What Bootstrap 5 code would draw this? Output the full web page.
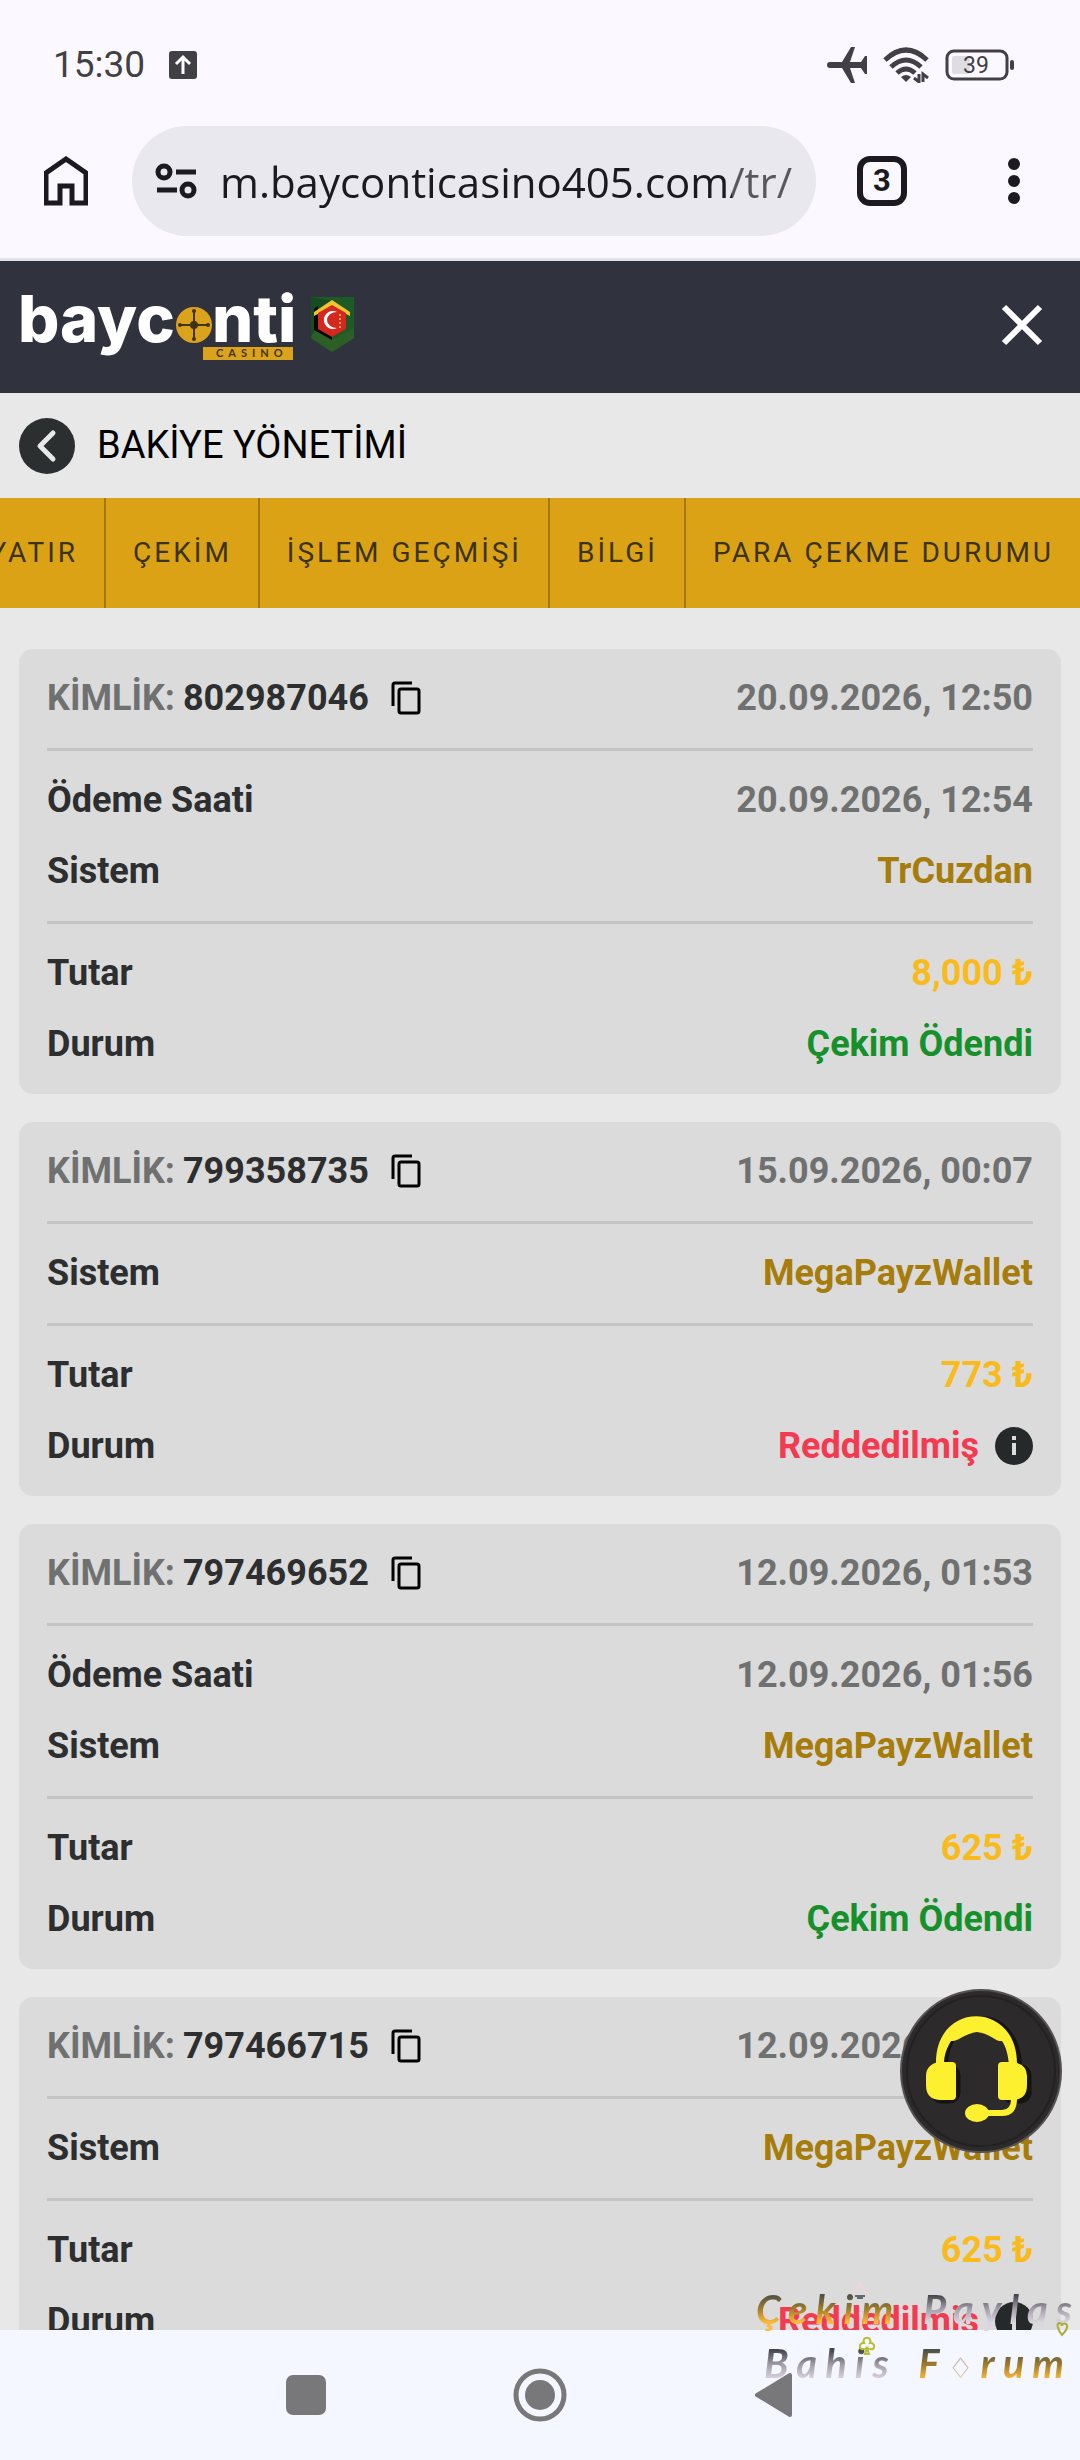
<!DOCTYPE html>
<html lang="tr">
<head>
    <meta charset="UTF-8">
    <meta name="viewport" content="width=device-width, initial-scale=1.0">
    <title>Bakiye Yönetimi</title>
    <!-- Bootstrap CSS -->
    <link href="https://cdn.jsdelivr.net/npm/bootstrap@5.3.0/dist/css/bootstrap.min.css" rel="stylesheet">
    <style>
        body {
            font-family: Roboto, "Liberation Sans", sans-serif;
            background: #e8e8e8;
            color: #2c2e2f;
        }
        svg { display: block; flex-shrink: 0; }
        button { border: 0; background: none; padding: 0; color: inherit; }

        /* phone status bar and browser toolbar */
        .phone-top { background: #fbf9ff; }
        .status-bar {
            height: 126px;
            padding: 4px 64px 0 53px;
            color: #414045;
            font-size: 37px;
        }
        .toolbar {
            padding-bottom: 22px;
            border-bottom: 3px solid #e2e1e9;
            color: #1b1a20;
        }
        .tool-btn { width: 132px; height: 110px; }
        .url-pill { height: 110px; background: #e9e8ee; padding: 0 22px; gap: 22px; min-width: 0; }
        .url-input {
            border: 0;
            outline: 0;
            padding: 0;
            min-width: 0;
            font-family: "Open Sans", Roboto, sans-serif;
            font-size: 42px;
            color: transparent;
            background: linear-gradient(90deg, #1b1a20 512px, #59585f 512px);
            -webkit-background-clip: text;
            background-clip: text;
        }
        .tab-count {
            width: 50px;
            height: 50px;
            border: 6px solid #1b1a20;
            border-radius: 13px;
            font-size: 31px;
            font-weight: 700;
        }

        /* site header */
        .site-header { height: 132px; background: #30323e; padding: 0 36px 4px 19px; }
        .page-head { height: 105px; padding-left: 19px; gap: 22px; color: #000; }
        .page-head h1 { font-size: 38px; font-weight: 400; }
        .tab-strip { height: 110px; background: #dba215; }
        .tab-link {
            padding: 0 26px 0 27px;
            font-size: 28px;
            letter-spacing: 3px;
            color: #3a3316;
            text-decoration: none;
            white-space: nowrap;
        }
        .tab-link + .tab-link { border-left: 2px solid #a2780f; }

        /* withdrawal cards */
        .history { padding: 41px 19px 0; gap: 28px; min-height: 0; }
        .pay-card {
            background: #dbdbdb;
            border-radius: 14px;
            padding: 0 28px;
            font-size: 36px;
            font-weight: 700;
            flex-shrink: 0;
        }
        .pay-group { padding: 13px 0 15px; }
        .pay-group + .pay-group { border-top: 3px solid #c4c4c4; }
        .pay-row { height: 71px; }
        .copy-btn { margin-left: 22px; }
        .soft { color: #6f7070; }
        .system { color: #a67c0a; }
        .amount { color: #f9bb1b; }
        .paid { color: #16902b; }
        .rejected { color: #f33a50; }

        /* support button */
        .support { right: 18px; bottom: 307px; }

        /* system navigation */
        .sys-nav { height: 130px; background: #f4f7ff; }
        .sys-nav button { width: 234px; height: 130px; }

        /* forum stamp */
        .stamp {
            right: 0;
            bottom: 66px;
            width: 324px;
            font-family: Lato, sans-serif;
            font-size: 40px;
            font-style: italic;
            font-weight: 700;
            line-height: 54px;
            letter-spacing: 8px;
            pointer-events: none;
        }
        .gold, .silver { -webkit-background-clip: text; background-clip: text; color: transparent; }
        .gold { background-image: linear-gradient(#4f5247 25%, #a07d2a 50%, #ffb93a 75%); }
        .silver { background-image: linear-gradient(#47474c 25%, #a39fa9 50%, #dcd6e2 75%); }
        .pip { font-size: 28px; font-style: normal; font-weight: 400; color: #e3cfd6; }
    </style>
</head>
<body class="d-flex flex-column vh-100 overflow-hidden position-relative">

    <div class="phone-top flex-shrink-0">
        <div class="status-bar d-flex align-items-center">
            <span>15:30</span>
            <svg class="ms-4" width="28" height="28" viewBox="0 0 28 28"><rect width="28" height="28" rx="3" fill="#414045"/><path d="M14 23V7M7 13l7-7 7 7" fill="none" stroke="#fff" stroke-width="3"/></svg>
            <div class="ms-auto d-flex align-items-center gap-3">
                <svg width="40" height="36" viewBox="0 0 40 36" fill="#414045"><path d="M3 15h12L24 0h4l-5 15h11l4-6h2v18h-2l-4-6H23l5 15h-4L15 21H3a3 3 0 0 1 0-6z"/></svg>
                <svg width="46" height="36" viewBox="0 0 46 36" fill="none" stroke="#414045" stroke-width="5"><path d="M2 13Q23-7 44 13M8 20Q23 6 38 20M14 26Q23 18 32 26"/><path d="M18 30q5-4 10 0l-5 5z" fill="#414045" stroke="none"/><path d="M36 27v8l-5-4M40 35v-8l5 4" stroke-width="3"/></svg>
                <svg width="71" height="32" viewBox="0 0 71 32"><rect x="2" y="2" width="60" height="28" rx="7" fill="none" stroke="#414045" stroke-width="3"/><rect x="7" y="7" width="18" height="18" rx="2" fill="#dfdde4"/><rect x="65" y="11" width="4" height="10" rx="2" fill="#414045"/><text x="31" y="24" text-anchor="middle" font-size="23" fill="#414045">39</text></svg>
            </div>
        </div>
        <div class="toolbar d-flex align-items-center">
            <button class="tool-btn d-flex align-items-center justify-content-center" aria-label="Ana sayfa">
                <svg width="44" height="50" viewBox="0 0 44 50"><path d="M2 47V17L22 3l20 14v30H28V30H16v17z" fill="none" stroke="#1b1a20" stroke-width="5"/></svg>
            </button>
            <div class="url-pill flex-grow-1 rounded-pill d-flex align-items-center">
                <svg width="44" height="38" viewBox="0 0 44 38" fill="none" stroke="#1b1a20" stroke-width="5"><circle cx="10" cy="10" r="6"/><path d="M22 10h20M3 28h20"/><circle cx="34" cy="28" r="6"/></svg>
                <input class="url-input flex-grow-1" type="text" aria-label="Adres" value="m.bayconticasino405.com/tr/" readonly>
            </div>
            <button class="tool-btn d-flex align-items-center justify-content-center" aria-label="Sekmeler">
                <span class="tab-count d-flex align-items-center justify-content-center">3</span>
            </button>
            <button class="tool-btn d-flex align-items-center justify-content-center" aria-label="Menü">
                <svg width="12" height="46" viewBox="0 0 12 46" fill="#1b1a20"><circle cx="6" cy="6" r="6"/><circle cx="6" cy="23" r="6"/><circle cx="6" cy="40" r="6"/></svg>
            </button>
        </div>
    </div>

    <header class="site-header flex-shrink-0 d-flex align-items-center justify-content-between">
        <a href="#" aria-label="bayconti casino">
            <svg width="340" height="86" viewBox="0 0 340 86">
                <g font-family="Inter, sans-serif" font-weight="800" font-size="65" fill="#fff">
                    <text x="-1" y="60">bayc</text>
                    <text x="193" y="60">nti</text>
                </g>
                <g stroke="#3f3418" stroke-width="2" fill="#3f3418">
                    <circle cx="175" cy="43" r="18" fill="#dba21c" stroke="none"/>
                    <path d="M161 43h28M175 29v28"/>
                    <circle cx="175" cy="43" r="3"/><circle cx="161" cy="43" r="1"/><circle cx="189" cy="43" r="1"/><circle cx="175" cy="29" r="1"/><circle cx="175" cy="57" r="1"/>
                </g>
                <rect x="184" y="65" width="90" height="13" fill="#dba21c"/>
                <text x="197" y="75" font-family="Lato, sans-serif" font-weight="700" font-size="11" letter-spacing="5" fill="#3f3418">CASINO</text>
                <path d="M292 15h43v41l-22 14-21-14z" fill="#1d5a28"/>
                <path d="M292 15l21 4v51l-21-14z" fill="#174b20"/>
                <path d="M296 47l17 11 22-12v10l-22 14-21-14z" fill="#2c5f26"/>
                <path d="M295 27v21l18 10V47l-14-8V24z" fill="#080808"/>
                <path d="M295 30l18-12 18 12v4l-18-9-18 9z" fill="#f1c32c"/>
                <path d="M299 31l14-8 14 8v16l-14 8-14-8z" fill="#d3271f"/>
                <path d="M318 30a9 9 0 1 0 0 16a10 8 0 0 1 0-16z" fill="#fff"/>
                <path d="M321 32v14" stroke="#eda04a" stroke-width="2" stroke-dasharray="2 2"/>
            </svg>
        </a>
        <button class="d-flex" aria-label="Kapat">
            <svg width="44" height="44" viewBox="0 0 44 44"><path d="M4 4l36 36M40 4L4 40" stroke="#fff" stroke-width="6"/></svg>
        </button>
    </header>

    <div class="page-head flex-shrink-0 d-flex align-items-center">
        <button aria-label="Geri">
            <svg width="56" height="56" viewBox="0 0 56 56"><circle cx="28" cy="28" r="28" fill="#2c2f30"/><path d="M34 15L21 28l13 13" fill="none" stroke="#e8e8e8" stroke-width="5" stroke-linecap="round" stroke-linejoin="round"/></svg>
        </button>
        <h1 class="m-0">BAKİYE YÖNETİMİ</h1>
    </div>

    <nav class="tab-strip flex-shrink-0 d-flex justify-content-end overflow-hidden">
        <a class="tab-link d-flex align-items-center" href="#">YATIR</a>
        <a class="tab-link d-flex align-items-center" href="#">ÇEKİM</a>
        <a class="tab-link d-flex align-items-center" href="#">İŞLEM GEÇMİŞİ</a>
        <a class="tab-link d-flex align-items-center" href="#">BİLGİ</a>
        <a class="tab-link d-flex align-items-center" href="#">PARA ÇEKME DURUMU</a>
    </nav>

    <main class="history flex-grow-1 d-flex flex-column overflow-hidden" id="history"></main>

    <button class="support position-absolute" aria-label="Canlı destek">
        <svg width="162" height="164" viewBox="0 0 162 164">
            <ellipse cx="81" cy="82" rx="80" ry="81" fill="#2d2a2b" stroke="#555253" stroke-width="2"/>
            <ellipse cx="81" cy="82" rx="74" ry="75" fill="none" stroke="#242122" stroke-width="2"/>
            <g transform="translate(4 3)" fill="#151313" stroke="#151313"><path d="M40 76C40 12 114 12 114 76" fill="none" stroke-width="8"/><rect x="27" y="73" width="29" height="38" rx="10"/><rect x="98" y="73" width="29" height="38" rx="10"/></g>
            <g fill="#fdf02f">
                <path d="M36 76C34 11 118 11 117 76h-8c-1-11-3-18-7-24-7 1-10-7-25-9-14 2-19 10-26 9-4 7-7 13-7 24z"/>
                <path d="M38 73h14q4 0 4 4v30q0 4-4 4H41q-15 0-15-15v-9q0-11 12-14zM102 73h12q13 3 13 14v9q0 15-15 15h-10q-4 0-4-4V77q0-4 4-4z"/>
                <path d="M114 110q0 14-12 14H84" fill="none" stroke="#fdf02f" stroke-width="6"/>
                <ellipse cx="77" cy="124" rx="12" ry="9"/>
            </g>
        </svg>
    </button>

    <footer class="sys-nav flex-shrink-0 d-flex justify-content-center">
        <button class="d-flex align-items-center justify-content-center" aria-label="Son uygulamalar">
            <svg width="40" height="40" viewBox="0 0 40 40"><rect width="40" height="40" rx="7" fill="#78787a"/></svg>
        </button>
        <button class="d-flex align-items-center justify-content-center" aria-label="Ana ekran">
            <svg width="54" height="54" viewBox="0 0 54 54"><circle cx="27" cy="27" r="24" fill="none" stroke="#78787a" stroke-width="5"/><circle cx="27" cy="27" r="15" fill="#78787a"/></svg>
        </button>
        <button class="d-flex align-items-center justify-content-center" aria-label="Geri dön">
            <svg width="38" height="46" viewBox="0 0 38 46"><path d="M2 23L35 3v40z" fill="#78787a" stroke="#78787a" stroke-width="4" stroke-linejoin="round"/></svg>
        </button>
    </footer>

    <div class="stamp position-absolute text-nowrap">
        <div class="d-flex justify-content-between"><span class="gold">Çekim</span><span class="silver">Paylas</span></div>
        <div class="d-flex justify-content-between px-2"><span class="silver">Bahis</span><span class="gold">F<span class="pip">♢</span>rum</span></div>
        <svg class="position-absolute top-0 start-0" width="324" height="108" viewBox="0 0 324 108" fill="none" stroke-width="2">
            <path d="M104 1c-2 5-6 7-6 10 0 2 4 3 6 1 2 2 6 1 6-1 0-3-4-5-6-10z" stroke="#efd5d8"/><path d="M99 14h10M101 16h6" stroke="#5b6b74"/>
            <path d="M111 66c-9 5-9-6-3-5-3-7 9-7 6 0 6-1 6 10-3 5l2 6h-4z" stroke="#b5bf2c"/>
            <path d="M306 53c-4-5-6-11-3-12 2 0 3 1 3 3 0-2 2-3 4-2 3 2 0 7-4 11z" stroke="#a9ae3c"/>
        </svg>
    </div>

    <script>
        const payments = [
            { id: '802987046', date: '20.09.2026, 12:50', paidAt: '20.09.2026, 12:54', system: 'TrCuzdan', amount: '8,000 ₺', paid: true },
            { id: '799358735', date: '15.09.2026, 00:07', system: 'MegaPayzWallet', amount: '773 ₺', paid: false },
            { id: '797469652', date: '12.09.2026, 01:53', paidAt: '12.09.2026, 01:56', system: 'MegaPayzWallet', amount: '625 ₺', paid: true },
            { id: '797466715', date: '12.09.2026, 01:47', system: 'MegaPayzWallet', amount: '625 ₺', paid: false }
        ];

        const copyIcon = '<svg width="30" height="34" viewBox="0 0 30 34" fill="none" stroke="#000" stroke-width="3"><path d="M2 25V4q0-2 2-2h17"/><rect x="8" y="8" width="20" height="24" rx="2"/></svg>';
        const infoIcon = '<svg width="38" height="38" viewBox="0 0 38 38"><circle cx="19" cy="19" r="19" fill="#26292a"/><path d="M17 9h4v4h-4zM17 16h4v12h-4z" fill="#dbdbdb"/></svg>';

        function row(label, value, cls) {
            return `<div class="pay-row d-flex align-items-center justify-content-between"><span>${label}</span><span class="${cls} d-flex align-items-center">${value}</span></div>`;
        }

        document.getElementById('history').innerHTML = payments.map(p => `
            <section class="pay-card">
                <div class="pay-group">
                    <div class="pay-row d-flex align-items-center">
                        <span class="soft me-2">KİMLİK:</span><span>${p.id}</span>
                        <button class="copy-btn" aria-label="Kopyala">${copyIcon}</button>
                        <span class="soft ms-auto">${p.date}</span>
                    </div>
                </div>
                <div class="pay-group">
                    ${p.paidAt ? row('Ödeme Saati', p.paidAt, 'soft') : ''}
                    ${row('Sistem', p.system, 'system')}
                </div>
                <div class="pay-group">
                    ${row('Tutar', p.amount, 'amount')}
                    ${p.paid ? row('Durum', 'Çekim Ödendi', 'paid') : row('Durum', 'Reddedilmiş<span class="ps-3">' + infoIcon + '</span>', 'rejected')}
                </div>
            </section>`).join('');
    </script>
    <!-- Bootstrap JS -->
    <script src="https://cdn.jsdelivr.net/npm/bootstrap@5.3.0/dist/js/bootstrap.bundle.min.js"></script>
</body>
</html>
